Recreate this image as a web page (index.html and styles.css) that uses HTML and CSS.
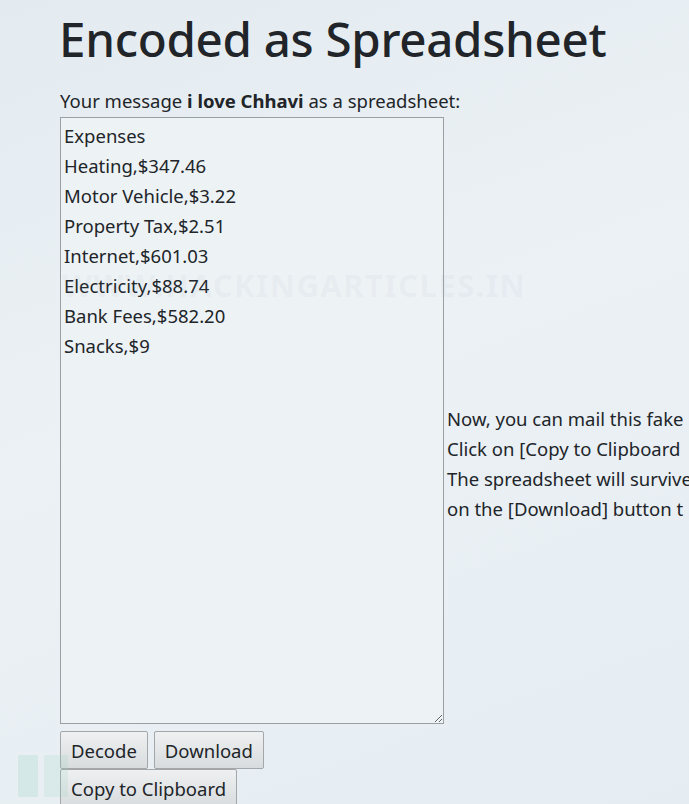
FILE: index.html
```html
<!DOCTYPE html>
<html lang="en">
<head>
    <meta charset="UTF-8">
    <meta name="viewport" content="width=device-width, initial-scale=1.0">
    <title>Encoded as Spreadsheet</title>
    <link rel="stylesheet" href="styles.css">
</head>
<body>
    <div class="page">
        <h1>Encoded as Spreadsheet</h1>
        <p class="intro">Your message <b>i love Chhavi</b> as a spreadsheet:</p>

        <div class="result">
            <textarea id="sheet" spellcheck="false">Expenses
Heating,$347.46
Motor Vehicle,$3.22
Property Tax,$2.51
Internet,$601.03
Electricity,$88.74
Bank Fees,$582.20
Snacks,$9</textarea>
            <div class="help">
                Now, you can mail this fake<br>
                Click on [Copy to Clipboard<br>
                The spreadsheet will survive<br>
                on the [Download] button t
            </div>
        </div>

        <div class="actions">
            <button type="button">Decode</button>
            <button type="button">Download</button>
            <button type="button">Copy to Clipboard</button>
        </div>
    </div>

    <div class="watermark">WWW.HACKINGARTICLES.IN</div>
    <div class="logo">
        <span class="logo-bar"></span>
        <span class="logo-bar short"></span>
    </div>
</body>
</html>
```

FILE: styles.css
```css
html, body {
    overflow: hidden;
}

body {
    margin: 0;
    height: 804px;
    font-family: "Noto Sans", "Open Sans", sans-serif;
    color: #212529;
    background: linear-gradient(160deg, #e4ebf0 0%, #ebf1f5 45%, #e6edf2 100%);
}

.page {
    padding: 0 0 0 60px;
}

h1 {
    margin: 0 0 0 -1px;
    padding-top: 5px;
    font-size: 47.5px;
    font-weight: 500;
    line-height: 68px;
    letter-spacing: -0.3px;
    white-space: nowrap;
}

.intro {
    margin: 15px 0 3px;
    font-size: 18.5px;
    line-height: 26px;
}

.intro b {
    font-weight: 700;
}

.result {
    display: flex;
    align-items: flex-start;
}

textarea {
    flex: none;
    width: 384px;
    height: 607px;
    box-sizing: border-box;
    margin: 0;
    padding: 3px 3px;
    border: 1px solid #9aa0a4;
    background: #edf2f5;
    color: #212529;
    font-family: "Noto Sans", "Open Sans", sans-serif;
    font-size: 18.5px;
    line-height: 30px;
    resize: both;
    outline: none;
}

.help {
    flex: none;
    margin: 287px 0 0 3px;
    font-size: 18.5px;
    line-height: 30px;
    white-space: nowrap;
}

.actions {
    display: flex;
    flex-wrap: wrap;
    column-gap: 6px;
    width: 370px;
    margin-top: 7px;
}

button {
    height: 38px;
    padding: 0 10px;
    border: 1px solid #a3a7aa;
    border-radius: 2px;
    background: linear-gradient(#eef0f1, #d9dcde);
    color: #212529;
    font-family: "Noto Sans", "Open Sans", sans-serif;
    font-size: 18.5px;
    cursor: pointer;
}

.watermark {
    position: absolute;
    left: 62px;
    top: 264px;
    font-family: "Noto Sans", sans-serif;
    font-size: 31px;
    font-weight: 700;
    letter-spacing: 1.5px;
    color: rgba(150, 160, 170, 0.08);
    pointer-events: none;
}

.logo {
    position: absolute;
    left: 18px;
    top: 755px;
    display: flex;
    gap: 6px;
    pointer-events: none;
}

.logo-bar {
    width: 20px;
    height: 42px;
    background: rgba(150, 210, 190, 0.25);
}

.logo-bar.short {
    width: 24px;
    height: 42px;
    background: rgba(150, 210, 190, 0.18);
}
```
